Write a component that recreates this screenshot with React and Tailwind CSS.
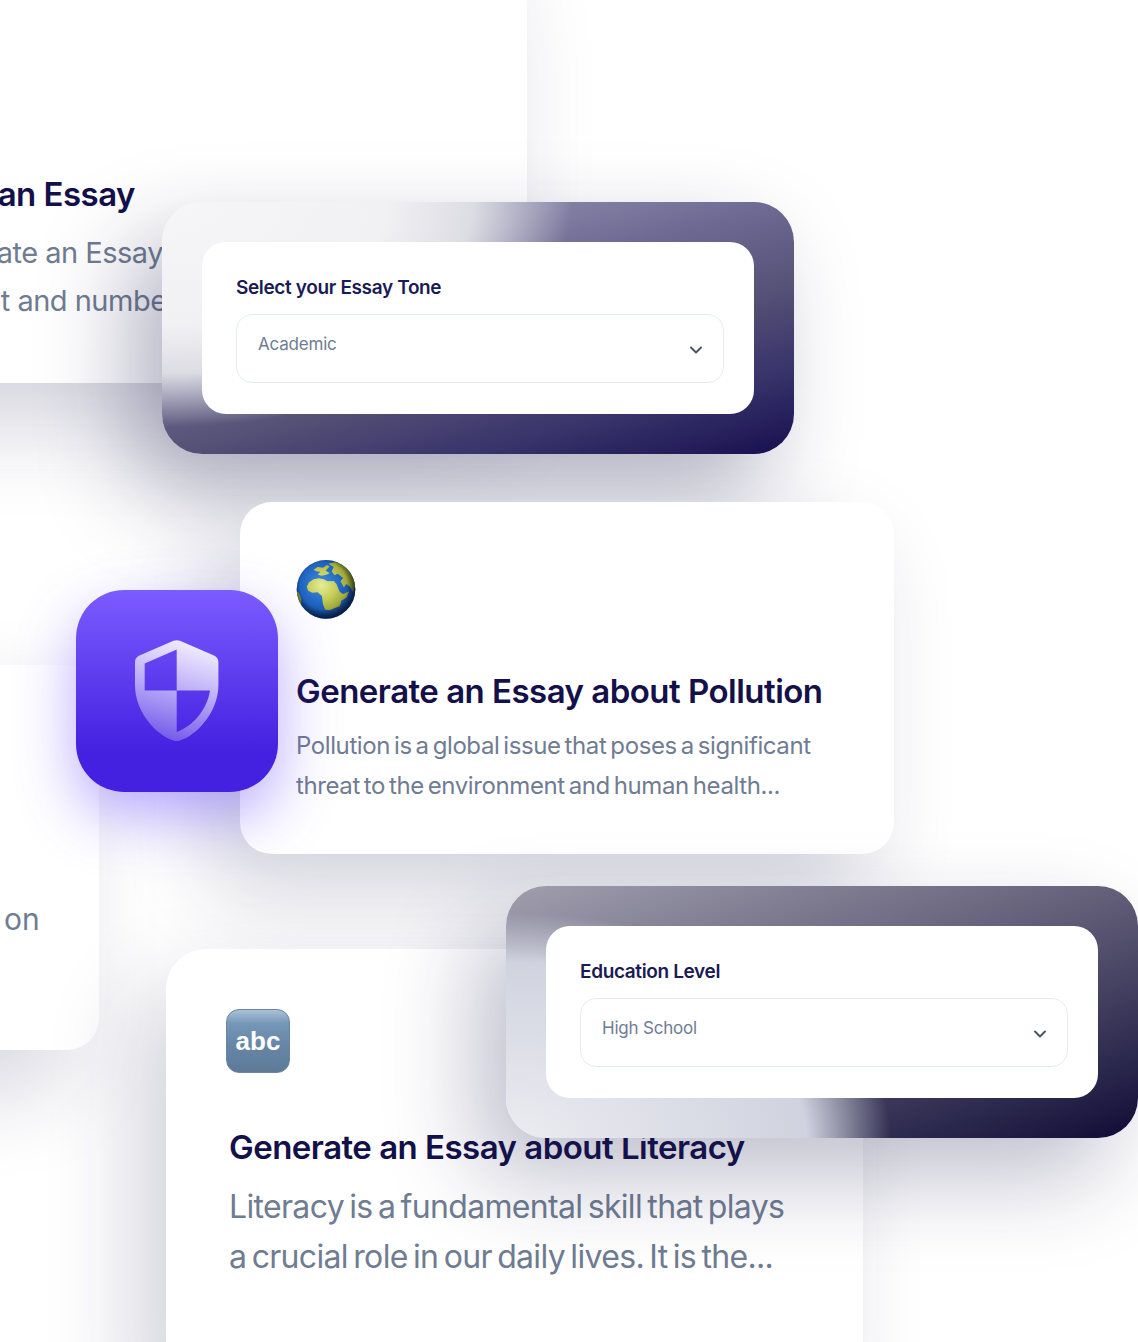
const font = { fontFamily: '"Inter", "Open Sans", sans-serif' }

function Chevron() {
  return (
    <svg width="14" height="10" viewBox="0 0 14 10" fill="none" stroke="#4b5563" strokeWidth="2" strokeLinecap="round" strokeLinejoin="round">
      <path d="M2 2.5 7 7.5 12 2.5" />
    </svg>
  )
}

function SelectBox({ label, value }) {
  return (
    <div className="flex h-[172px] w-[552px] flex-col rounded-[24px] bg-white pl-[34px] pr-[30px] pt-[33px]">
      <div className="text-[19px] font-semibold leading-[26px] tracking-[-0.36px] text-[#1a1a55]">{label}</div>
      <div className="mt-[13px] flex h-[69px] items-start justify-between rounded-[16px] border border-[#e6ebf3] pl-[21px] pr-[20px] pt-[17px]">
        <span className="text-[17px] leading-[24px] tracking-[-0.2px] text-[#6f7c92]">{value}</span>
        <span className="mt-[13px]"><Chevron /></span>
      </div>
    </div>
  )
}

function Globe() {
  return (
    <svg width="60" height="60" viewBox="36 26 178 178">
      <defs>
        <radialGradient id="sea" cx="42%" cy="42%" r="62%">
          <stop offset="0%" stopColor="#3f8fe4" />
          <stop offset="60%" stopColor="#1e62bc" />
          <stop offset="100%" stopColor="#123f86" />
        </radialGradient>
        <radialGradient id="land" gradientUnits="userSpaceOnUse" cx="112" cy="104" r="100">
          <stop offset="0%" stopColor="#e6ec96" />
          <stop offset="45%" stopColor="#c4cc58" />
          <stop offset="100%" stopColor="#7f8a20" />
        </radialGradient>
        <radialGradient id="rim" cx="46%" cy="44%" r="56%">
          <stop offset="72%" stopColor="#000" stopOpacity="0" />
          <stop offset="100%" stopColor="#04102c" stopOpacity="0.75" />
        </radialGradient>
        <clipPath id="ball"><circle cx="125" cy="116" r="87" /></clipPath>
      </defs>
      <circle cx="125" cy="116" r="87" fill="url(#sea)" />
      <g clipPath="url(#ball)" fill="url(#land)">
        <path d="M68 108 74 96 88 86 104 83 118 86 130 92 148 91 156 100 166 124 176 130 194 122 186 140 170 150 166 166 150 172 136 178 122 176 116 160 113 136 100 125 84 126 72 120Z" />
        <path d="M88 58 100 50 116 52 128 44 136 48 124 60 136 68 126 73 112 76 100 72 108 64 96 62Z" />
        <path d="M132 40 150 36 176 38 198 60 214 100 205 124 196 108 186 100 178 110 168 92 176 82 160 70 150 74 142 62 148 50Z" />
        <path d="M36 122 44 126 52 146 50 172 36 170Z" />
        <path d="M162 152 170 150 166 164 160 164Z" />
      </g>
      <circle cx="125" cy="116" r="87" fill="url(#rim)" />
    </svg>
  )
}

function Shield() {
  return (
    <svg width="84" height="102" viewBox="0 0 84 102">
      <defs>
        <linearGradient id="shield" gradientUnits="userSpaceOnUse" x1="60" y1="8" x2="30" y2="102">
          <stop offset="0%" stopColor="#fff" stopOpacity="0.88" />
          <stop offset="100%" stopColor="#fff" stopOpacity="0.22" />
        </linearGradient>
      </defs>
      <path
        fill="url(#shield)"
        fillRule="evenodd"
        d="M38.5.7Q41.7-.4 45 .7L79 15.5Q83.4 17.5 83.4 22V45C83.4 72 62 95 45 100.5Q41.7 101.5 38.5 100.5C21 95 0 72 0 45V22Q0 17.5 4.4 15.5ZM41.7 9.5 9.7 23.5V50.5H41.7ZM41.7 50.5V92C58 86 72 70 75 50.5Z"
      />
    </svg>
  )
}

export default function App() {
  return (
    <div style={font} className="relative h-[1342px] w-[1138px] overflow-hidden bg-white">
      {/* card cut off at the top left */}
      <div className="absolute -left-[420px] -top-[60px] flex h-[443px] w-[947px] flex-col items-end whitespace-nowrap bg-white pt-[234px] shadow-[-30px_40px_90px_rgba(30,30,80,0.2)]">
        <div className="mr-[392px] text-[33px] font-semibold leading-[40px] tracking-[-0.52px] text-[#14104a]">Generate an Essay</div>
        <div className="mr-[364px] mt-[15px] text-[29px] leading-[48px] tracking-[-0.5px] text-[#6f7c92]">Use AI to generate an Essay</div>
        <div className="mr-[350px] text-[29px] leading-[48px] tracking-[-0.5px] text-[#6f7c92]">with format and number</div>
      </div>

      {/* second card, left edge */}
      <div className="absolute -left-[300px] top-[665px] flex h-[385px] w-[399px] items-start rounded-[32px] bg-white pl-[304px] pt-[230px] shadow-[-30px_40px_90px_rgba(30,30,80,0.18)]">
        <div className="text-[30px] leading-[48px] text-[#6f7c92]">on</div>
      </div>

      {/* tone panel */}
      <div className="absolute left-[162px] top-[202px] flex h-[252px] w-[632px] items-center justify-center rounded-[40px] bg-[radial-gradient(ellipse_410px_225px_at_0%_0%,#f6f6f8_0%,#f1f1f4_55%,#dcdce3_76%,rgba(220,220,227,0)_100%),linear-gradient(165deg,#8581a5_25%,#6e6993_40%,#565176_60%,#38336a_80%,#170f4f_100%)] shadow-[-30px_40px_90px_rgba(30,30,80,0.34)]">
        <SelectBox label="Select your Essay Tone" value="Academic" />
      </div>

      {/* pollution card */}
      <div className="absolute left-[240px] top-[502px] h-[352px] w-[654px] rounded-[32px] bg-white pl-[56px] pt-[57px] shadow-[-30px_40px_90px_rgba(30,30,80,0.2)]">
        <Globe />
        <h2 className="mt-[50px] whitespace-nowrap text-[33px] font-semibold leading-[44px] tracking-[-0.52px] text-[#14104a]">Generate an Essay about Pollution</h2>
        <p className="mt-[13px] text-[24px] leading-[40px] tracking-[-0.4px] text-[#6f7c92] [word-spacing:-2.4px]">
          Pollution is a global issue that poses a significant<br />threat to the environment and human health...
        </p>
      </div>

      {/* shield tile */}
      <div className="absolute left-[76px] top-[590px] flex h-[202px] w-[202px] items-center justify-center rounded-[48px] bg-[linear-gradient(180deg,#7b5cff_0%,#4421e0_80%,#4421e0_100%)] shadow-[0_24px_60px_rgba(90,60,255,0.42)]">
        <Shield />
      </div>

      {/* literacy card */}
      <div className="absolute left-[166px] top-[949px] h-[440px] w-[697px] rounded-[40px] bg-white pl-[63px] pt-[60px] shadow-[-30px_40px_90px_rgba(30,30,80,0.2)]">
        <div className="-ml-[3px] flex h-[64px] w-[64px] items-center justify-center rounded-[13px] border border-[#6a86a3] bg-[linear-gradient(180deg,#a9c2d8_0%,#7596b6_22%,#6685a6_60%,#5d7a98_100%)] text-[26px] font-bold text-white" style={{ fontFamily: '"Liberation Sans", sans-serif' }}>
          abc
        </div>
        <h2 className="mt-[52px] whitespace-nowrap text-[33px] font-semibold leading-[44px] tracking-[-0.52px] text-[#14104a]">Generate an Essay about Literacy</h2>
        <p className="mt-[13px] text-[32px] leading-[50px] tracking-[-0.67px] text-[#6f7c92] [word-spacing:-3px]">
          Literacy is a fundamental skill that plays<br />a crucial role in our daily lives. It is the...
        </p>
      </div>

      {/* education panel */}
      <div className="absolute left-[506px] top-[886px] flex h-[252px] w-[632px] items-center justify-center rounded-[40px] bg-[radial-gradient(ellipse_385px_225px_at_0%_100%,#ececf1_0%,#d0d3df_78%,rgba(208,211,223,0)_100%),linear-gradient(160deg,#a09eae_0%,#625e78_48%,#2d2a4f_82%,#100b35_100%)] shadow-[-30px_40px_90px_rgba(30,30,80,0.28)]">
        <SelectBox label="Education Level" value="High School" />
      </div>
    </div>
  )
}
